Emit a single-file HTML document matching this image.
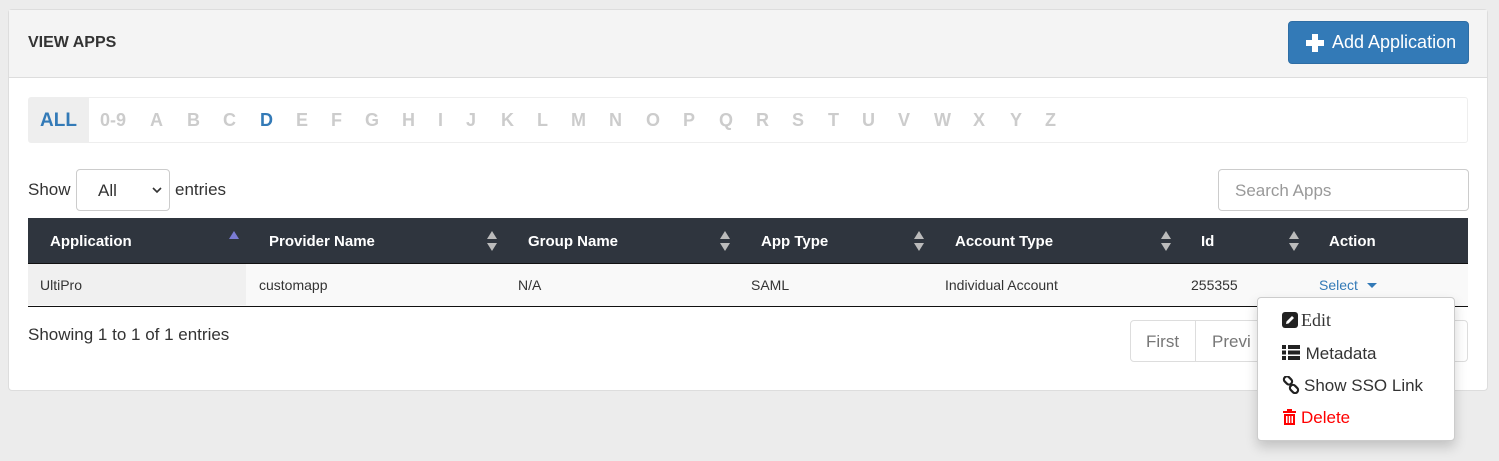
<!DOCTYPE html>
<html><head><style>
body{margin:0;width:1499px;height:461px;background:#ececec;font-family:"Liberation Sans",sans-serif;position:relative;overflow:hidden;color:#333}
.a{position:absolute}
.panel{left:8px;top:9px;width:1480px;height:382px;background:#fff;border:1px solid #ddd;border-radius:4px;box-sizing:border-box}
.hd{left:9px;top:10px;width:1478px;height:67px;background:#f4f4f4;border-bottom:1px solid #ddd}
.lt{top:110px;font-size:18px;font-weight:bold;color:#ccc}
.th{top:233px;font-size:15px;font-weight:bold;color:#fff}
.td{top:277px;font-size:14px;color:#333}
.sort{top:231px;width:10px;height:20px}
.mi{left:1282px;font-size:17px;color:#333}
</style></head><body>
<div class="a panel"></div>
<div class="a hd"></div>
<div class="a" style="left:28px;top:34px;font-size:16px;font-weight:bold;color:#333">VIEW APPS</div>
<div class="a" style="left:1288px;top:21px;width:181px;height:43px;background:#337ab7;border-radius:4px;color:#fff;font-size:18px;line-height:41px;box-sizing:border-box;border:1px solid #2e6da4">
<span class="a" style="left:17px;top:12px;width:18px;height:18px"><span class="a" style="left:6px;top:0;width:6px;height:18px;background:#fff"></span><span class="a" style="left:0;top:6px;width:18px;height:6px;background:#fff"></span></span>
<span class="a" style="left:43px;top:0">Add Application</span></div>
<div class="a" style="left:28px;top:97px;width:1440px;height:46px;border:1px solid #eee;box-sizing:border-box;border-radius:3px"></div>
<div class="a" style="left:29px;top:98px;width:60px;height:44px;background:#eee"></div>
<div class="a lt" style="left:40px;color:#337ab7;font-size:19px">ALL</div>
<div class="a lt" style="left:100px">0-9</div><div class="a lt" style="left:150px">A</div><div class="a lt" style="left:187px">B</div><div class="a lt" style="left:223px">C</div><div class="a lt" style="left:260px;color:#337ab7">D</div><div class="a lt" style="left:296px">E</div><div class="a lt" style="left:331px">F</div><div class="a lt" style="left:365px">G</div><div class="a lt" style="left:402px">H</div><div class="a lt" style="left:438px">I</div><div class="a lt" style="left:466px">J</div><div class="a lt" style="left:501px">K</div><div class="a lt" style="left:537px">L</div><div class="a lt" style="left:571px">M</div><div class="a lt" style="left:609px">N</div><div class="a lt" style="left:646px">O</div><div class="a lt" style="left:683px">P</div><div class="a lt" style="left:719px">Q</div><div class="a lt" style="left:756px">R</div><div class="a lt" style="left:792px">S</div><div class="a lt" style="left:828px">T</div><div class="a lt" style="left:862px">U</div><div class="a lt" style="left:898px">V</div><div class="a lt" style="left:934px">W</div><div class="a lt" style="left:973px">X</div><div class="a lt" style="left:1010px">Y</div><div class="a lt" style="left:1045px">Z</div>
<div class="a" style="left:28px;top:180px;font-size:17px">Show</div>
<div class="a" style="left:76px;top:169px;width:94px;height:42px;border:1px solid #ccc;border-radius:4px;box-sizing:border-box;font-size:17px;padding:11px 0 0 21px">All<svg class="a" style="left:75px;top:17px" width="10" height="7"><path d="M1 1L5 5L9 1" stroke="#333" stroke-width="1.6" fill="none"/></svg></div>
<div class="a" style="left:175px;top:180px;font-size:17px">entries</div>
<div class="a" style="left:1218px;top:169px;width:251px;height:42px;border:1px solid #ccc;border-radius:4px;box-sizing:border-box;font-size:17px;color:#999;padding:11px 0 0 16px">Search Apps</div>
<div class="a" style="left:28px;top:218px;width:1440px;height:45px;background:#2f353e"></div>
<div class="a" style="left:28px;top:263px;width:1440px;height:42px;background:#f9f9f9;border-top:1px solid #111;border-bottom:1px solid #111"></div>
<div class="a" style="left:28px;top:264px;width:218px;height:41px;background:#f0f0f0"></div>
<div class="a th" style="left:50px">Application</div><div class="a th" style="left:269px">Provider Name</div><div class="a th" style="left:528px">Group Name</div><div class="a th" style="left:761px">App Type</div><div class="a th" style="left:955px">Account Type</div><div class="a th" style="left:1201px">Id</div><div class="a th" style="left:1329px">Action</div>
<svg class="a" style="left:229px;top:230px" width="10" height="10"><path d="M0 9L5 1L10 9Z" fill="#7b7bd4"/></svg>
<svg class="a sort" style="left:487px"><path d="M0 8L5 0L10 8ZM0 12L5 20L10 12Z" fill="#bbb"/></svg>
<svg class="a sort" style="left:720px"><path d="M0 8L5 0L10 8ZM0 12L5 20L10 12Z" fill="#bbb"/></svg>
<svg class="a sort" style="left:914px"><path d="M0 8L5 0L10 8ZM0 12L5 20L10 12Z" fill="#bbb"/></svg>
<svg class="a sort" style="left:1161px"><path d="M0 8L5 0L10 8ZM0 12L5 20L10 12Z" fill="#bbb"/></svg>
<svg class="a sort" style="left:1289px"><path d="M0 8L5 0L10 8ZM0 12L5 20L10 12Z" fill="#bbb"/></svg>
<div class="a td" style="left:40px">UltiPro</div><div class="a td" style="left:259px">customapp</div><div class="a td" style="left:518px">N/A</div><div class="a td" style="left:751px">SAML</div><div class="a td" style="left:945px">Individual Account</div><div class="a td" style="left:1191px">255355</div>
<div class="a td" style="left:1319px;color:#337ab7">Select</div>
<svg class="a" style="left:1367px;top:283px" width="10" height="6"><path d="M0 0L10 0L5 5Z" fill="#337ab7"/></svg>
<div class="a" style="left:28px;top:325px;font-size:17px">Showing 1 to 1 of 1 entries</div>
<div class="a" style="left:1130px;top:320px;width:338px;height:42px;border:1px solid #ddd;border-radius:4px;box-sizing:border-box"></div>
<div class="a" style="left:1195px;top:321px;width:1px;height:40px;background:#ddd"></div>
<div class="a" style="left:1146px;top:332px;font-size:17px;color:#777">First</div>
<div class="a" style="left:1212px;top:332px;font-size:17px;color:#777">Previ</div>
<div class="a" style="left:1257px;top:297px;width:198px;height:144px;background:#fff;border:1px solid #ccc;border-radius:4px;box-sizing:border-box;box-shadow:0 6px 12px rgba(0,0,0,.18)"></div>
<svg class="a" style="left:1282px;top:312px" width="16" height="16"><rect x="0" y="0" width="16" height="16" rx="3" fill="#222"/><path d="M4 12L4.5 9.5L10 4L12 6L6.5 11.5Z" fill="#fff"/></svg>
<div class="a" style="left:1301px;top:310px;font-size:18px;font-family:'Liberation Serif',serif;color:#333">Edit</div>
<svg class="a" style="left:1282px;top:345px" width="18" height="15"><g fill="#222"><rect x="0" y="0" width="4" height="4"/><rect x="6" y="0" width="12" height="4"/><rect x="0" y="5.5" width="4" height="4"/><rect x="6" y="5.5" width="12" height="4"/><rect x="0" y="11" width="4" height="4"/><rect x="6" y="11" width="12" height="4"/></g></svg>
<div class="a mi" style="top:344px">&nbsp;&nbsp;&nbsp;&nbsp;&nbsp;Metadata</div>
<svg class="a" style="left:1282px;top:376px" width="18" height="18"><g fill="none" stroke="#222" stroke-width="2.2"><rect x="1.5" y="1.5" width="9" height="6" rx="3" transform="rotate(45 6 4.5)"/><rect x="7.5" y="10" width="9" height="6" rx="3" transform="rotate(45 12 13)"/></g></svg>
<div class="a mi" style="top:376px;left:1304px">Show SSO Link</div>
<svg class="a" style="left:1283px;top:409px" width="13" height="16"><g fill="#f00"><rect x="0" y="2" width="13" height="2"/><rect x="4" y="0" width="5" height="2"/><path d="M1 5H12V16H1ZM3 7V14H4.5V7ZM5.8 7V14H7.2V7ZM8.5 7V14H10V7Z" fill-rule="evenodd"/></g></svg>
<div class="a mi" style="top:408px;left:1301px;color:#f00">Delete</div>
</body></html>
